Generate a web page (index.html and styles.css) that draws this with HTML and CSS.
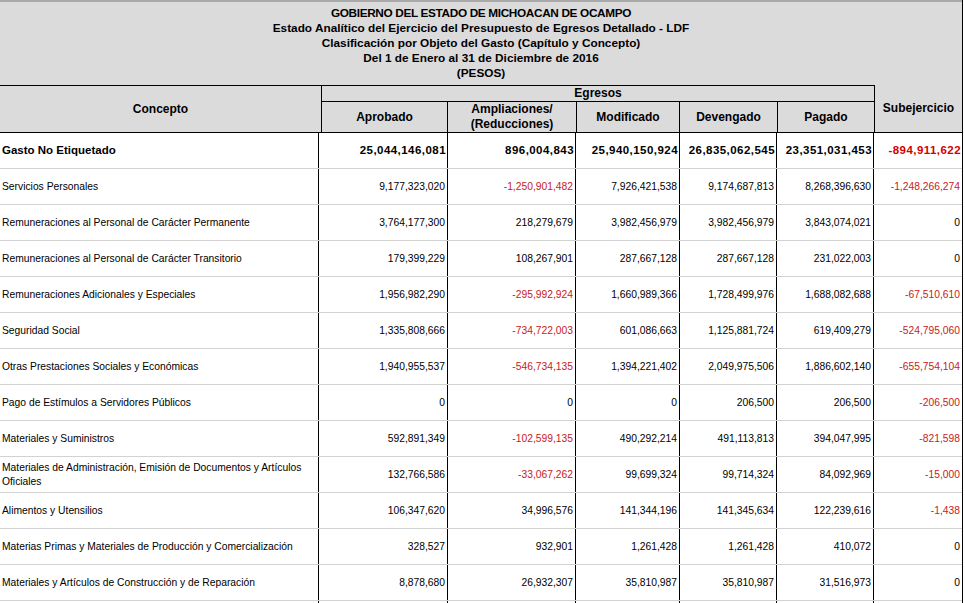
FILE: index.html
```html
<!DOCTYPE html>
<html lang="es">
<head>
<meta charset="utf-8">
<title>Estado Analítico del Ejercicio del Presupuesto de Egresos Detallado - LDF</title>
<link rel="stylesheet" href="styles.css">
</head>
<body>
<div class="report">
  <div class="title">
    <div class="t-main">GOBIERNO DEL ESTADO DE MICHOACAN DE OCAMPO</div>
    <div>Estado Analítico del Ejercicio del Presupuesto de Egresos Detallado - LDF</div>
    <div>Clasificación por Objeto del Gasto (Capítulo y Concepto)</div>
    <div>Del 1 de Enero al 31 de Diciembre de 2016</div>
    <div>(PESOS)</div>
  </div>
  <div class="head">
    <div class="h-concepto">Concepto</div>
    <div class="h-egresos">Egresos</div>
    <div class="h-sub">Subejercicio</div>
    <div class="h-col">Aprobado</div>
    <div class="h-col">Ampliaciones/<br>(Reducciones)</div>
    <div class="h-col">Modificado</div>
    <div class="h-col">Devengado</div>
    <div class="h-col h-last">Pagado</div>
  </div>
  <div class="rows">
    <div class="row total">
      <div class="c">Gasto No Etiquetado</div>
      <div class="n">25,044,146,081</div><div class="n">896,004,843</div><div class="n">25,940,150,924</div><div class="n">26,835,062,545</div><div class="n">23,351,031,453</div><div class="n neg">-894,911,622</div>
    </div>
    <div class="row">
      <div class="c">Servicios Personales</div>
      <div class="n">9,177,323,020</div><div class="n neg">-1,250,901,482</div><div class="n">7,926,421,538</div><div class="n">9,174,687,813</div><div class="n">8,268,396,630</div><div class="n neg">-1,248,266,274</div>
    </div>
    <div class="row">
      <div class="c">Remuneraciones al Personal de Carácter Permanente</div>
      <div class="n">3,764,177,300</div><div class="n">218,279,679</div><div class="n">3,982,456,979</div><div class="n">3,982,456,979</div><div class="n">3,843,074,021</div><div class="n">0</div>
    </div>
    <div class="row">
      <div class="c">Remuneraciones al Personal de Carácter Transitorio</div>
      <div class="n">179,399,229</div><div class="n">108,267,901</div><div class="n">287,667,128</div><div class="n">287,667,128</div><div class="n">231,022,003</div><div class="n">0</div>
    </div>
    <div class="row">
      <div class="c">Remuneraciones Adicionales y Especiales</div>
      <div class="n">1,956,982,290</div><div class="n neg">-295,992,924</div><div class="n">1,660,989,366</div><div class="n">1,728,499,976</div><div class="n">1,688,082,688</div><div class="n neg">-67,510,610</div>
    </div>
    <div class="row">
      <div class="c">Seguridad Social</div>
      <div class="n">1,335,808,666</div><div class="n neg">-734,722,003</div><div class="n">601,086,663</div><div class="n">1,125,881,724</div><div class="n">619,409,279</div><div class="n neg">-524,795,060</div>
    </div>
    <div class="row">
      <div class="c">Otras Prestaciones Sociales y Económicas</div>
      <div class="n">1,940,955,537</div><div class="n neg">-546,734,135</div><div class="n">1,394,221,402</div><div class="n">2,049,975,506</div><div class="n">1,886,602,140</div><div class="n neg">-655,754,104</div>
    </div>
    <div class="row">
      <div class="c">Pago de Estímulos a Servidores Públicos</div>
      <div class="n">0</div><div class="n">0</div><div class="n">0</div><div class="n">206,500</div><div class="n">206,500</div><div class="n neg">-206,500</div>
    </div>
    <div class="row">
      <div class="c">Materiales y Suministros</div>
      <div class="n">592,891,349</div><div class="n neg">-102,599,135</div><div class="n">490,292,214</div><div class="n">491,113,813</div><div class="n">394,047,995</div><div class="n neg">-821,598</div>
    </div>
    <div class="row">
      <div class="c">Materiales de Administración, Emisión de Documentos y Artículos Oficiales</div>
      <div class="n">132,766,586</div><div class="n neg">-33,067,262</div><div class="n">99,699,324</div><div class="n">99,714,324</div><div class="n">84,092,969</div><div class="n neg">-15,000</div>
    </div>
    <div class="row">
      <div class="c">Alimentos y Utensilios</div>
      <div class="n">106,347,620</div><div class="n">34,996,576</div><div class="n">141,344,196</div><div class="n">141,345,634</div><div class="n">122,239,616</div><div class="n neg">-1,438</div>
    </div>
    <div class="row">
      <div class="c">Materias Primas y Materiales de Producción y Comercialización</div>
      <div class="n">328,527</div><div class="n">932,901</div><div class="n">1,261,428</div><div class="n">1,261,428</div><div class="n">410,072</div><div class="n">0</div>
    </div>
    <div class="row">
      <div class="c">Materiales y Artículos de Construcción y de Reparación</div>
      <div class="n">8,878,680</div><div class="n">26,932,307</div><div class="n">35,810,987</div><div class="n">35,810,987</div><div class="n">31,516,973</div><div class="n">0</div>
    </div>
    <div class="row">
      <div class="c"></div>
      <div class="n"></div><div class="n"></div><div class="n"></div><div class="n"></div><div class="n"></div><div class="n"></div>
    </div>
  </div>
</div>
</body>
</html>
```

FILE: styles.css
```css
* { box-sizing: border-box; }
html, body { margin: 0; padding: 0; background: #ffffff; }
body { font-family: "Liberation Sans", Arial, sans-serif; color: #000; }

.report {
  width: 963px;
  border-right: 1px solid #000;
}

.title {
  background: #dcdbdc;
  border-top: 2px solid #a9a9a9;
  height: 85px;
  padding-top: 4px;
  text-align: center;
  font-weight: bold;
  font-size: 11.8px;
  line-height: 15px;
}
.t-main { letter-spacing: -0.35px; }

.head {
  display: grid;
  grid-template-columns: 321px 126px 129px 103px 98px 98px 87px;
  grid-template-rows: 17px 31px;
  background: #dcdbdc;
  font-weight: bold;
  font-size: 12px;
  line-height: 15px;
}
.head > div {
  display: flex;
  align-items: center;
  justify-content: center;
  text-align: center;
}
.h-concepto {
  grid-column: 1;
  grid-row: 1 / 3;
  border-top: 1px solid #000;
  border-bottom: 1px solid #000;
}
.h-egresos {
  grid-column: 2 / 7;
  grid-row: 1;
  border: 1px solid #000;
}
.h-sub {
  grid-column: 7;
  grid-row: 1 / 3;
  border-bottom: 1px solid #000;
  padding-bottom: 1px;
}
.h-col {
  grid-row: 2;
  border-left: 1px solid #000;
  border-bottom: 1px solid #000;
}
.h-last { border-right: 1px solid #000; }

.row {
  display: grid;
  grid-template-columns: 318px 129px 128px 104px 97px 97px 89px;
  height: 36px;
  border-bottom: 1px solid #d2d2d2;
  font-size: 10.3px;
  line-height: 14px;
}
.row > div {
  display: flex;
  align-items: center;
}
.c {
  padding-left: 2px;
  padding-right: 12px;
}
.n {
  border-left: 1px solid #000;
  justify-content: flex-end;
  padding-right: 2px;
}
.neg { color: #c81a1a; }

.total { font-weight: bold; font-size: 11.5px; }
.total > div { padding-bottom: 1px; }
.total .n { letter-spacing: 0.45px; padding-right: 1px; }
.total .neg { color: #d40000; }
```
